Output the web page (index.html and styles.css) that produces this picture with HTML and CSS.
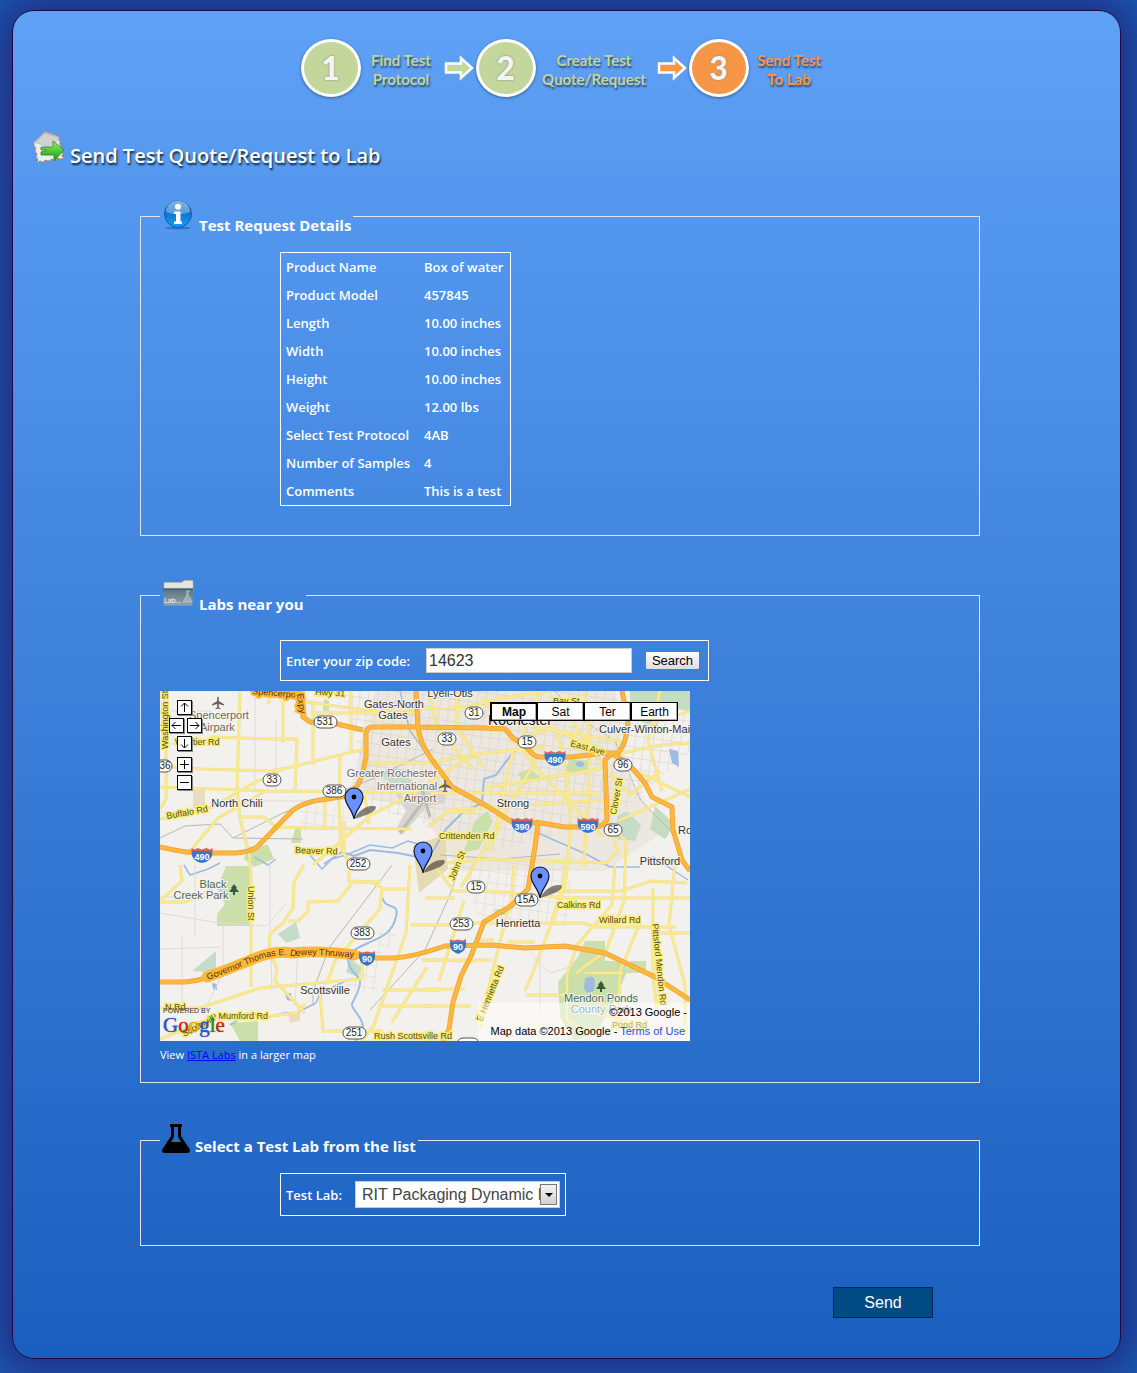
FILE: index.html
```html
<!DOCTYPE html>
<html lang="en">
<head>
<meta charset="utf-8">
<title>Send Test Quote/Request to Lab</title>
<link rel="stylesheet" href="styles.css">
</head>
<body>
<main class="panel">
  <ol class="steps">
    <li class="step"><span class="step-num">1</span><span class="step-text">Find Test<br>Protocol</span></li>
    <li class="step-arrow"><svg width="30" height="26" viewBox="0 0 30 26"><path d="M2 8.500h15V3l11 10-11 10v-5.500H2z" fill="#c3d69b" stroke="#fff" stroke-width="2.500"/></svg></li>
    <li class="step step-wide"><span class="step-num">2</span><span class="step-text">Create Test<br>Quote/Request</span></li>
    <li class="step-arrow"><svg width="30" height="26" viewBox="0 0 30 26"><path d="M2 8.500h15V3l11 10-11 10v-5.500H2z" fill="#f79646" stroke="#fff" stroke-width="2.500"/></svg></li>
    <li class="step current"><span class="step-num">3</span><span class="step-text">Send Test<br>To Lab</span></li>
  </ol>

  <h1 class="title">
    <svg width="32" height="34" viewBox="0 0 32 34">
      <defs>
        <linearGradient id="env" x1="0" y1="0" x2="0" y2="1"><stop offset="0" stop-color="#b5b5b5"/><stop offset="1" stop-color="#f4f4f4"/></linearGradient>
        <linearGradient id="arr" x1="0" y1="0" x2="0" y2="1"><stop offset="0" stop-color="#9af06a"/><stop offset="1" stop-color="#0f9a0c"/></linearGradient>
      </defs>
      <path d="M1 12 12 1l14 5 4 22-25 4z" fill="url(#env)" stroke="#8c8c8c" stroke-width=".8"/>
      <path d="M3 12 12 3l13 4 1 7-12 4z" fill="#d2d2d2" stroke="#aaa" stroke-width=".6"/>
      <path d="M1 12l14 5 11-7 4 18-25 4z" fill="#ededed" stroke="#bbb" stroke-width=".6"/>
      <path d="M4.500 31 1.500 14M29.500 27 26.500 11M6 31.500l23-3.500" stroke="#d24a3c" stroke-dasharray="2 4" fill="none"/>
      <path d="M8 17h12v-6l11 9-10 11v-6H8v-3l5-1v-1H8z" fill="url(#arr)" stroke="#159412" stroke-width=".8"/>
    </svg>
    <span>Send Test Quote/Request to Lab</span>
  </h1>

  <fieldset class="group details">
    <legend>
      <svg width="32" height="32" viewBox="0 0 32 32">
        <defs><linearGradient id="inf" x1="0" y1="0" x2="0" y2="1"><stop offset="0" stop-color="#4c96dc"/><stop offset=".45" stop-color="#1270ce"/><stop offset="1" stop-color="#12a0ff"/></linearGradient></defs>
        <ellipse cx="16" cy="30" rx="13" ry="1.500" fill="#1c5aa8" opacity=".55"/>
        <circle cx="16" cy="16" r="13.500" fill="url(#inf)" stroke="#0d5cb4"/>
        <path d="M4 14a12 12 0 0 1 24 0c-7 3-17 3-24 0z" fill="#fff" opacity=".3"/>
        <circle cx="16" cy="8.800" r="3" fill="#fff"/>
        <path d="M12 13.500h6.500v10H20v2.500h-8v-2.500h2V16h-2z" fill="#fff"/>
      </svg>
      <span>Test Request Details</span>
    </legend>
    <table class="box facts">
      <tr><th scope="row">Product Name</th><td>Box of water</td></tr>
      <tr><th scope="row">Product Model</th><td>457845</td></tr>
      <tr><th scope="row">Length</th><td>10.00 inches</td></tr>
      <tr><th scope="row">Width</th><td>10.00 inches</td></tr>
      <tr><th scope="row">Height</th><td>10.00 inches</td></tr>
      <tr><th scope="row">Weight</th><td>12.00 lbs</td></tr>
      <tr><th scope="row">Select Test Protocol</th><td>4AB</td></tr>
      <tr><th scope="row">Number of Samples</th><td>4</td></tr>
      <tr><th scope="row">Comments</th><td>This is a test</td></tr>
    </table>
  </fieldset>

  <fieldset class="group labs">
    <legend>
      <svg width="32" height="32" viewBox="0 0 32 32">
        <defs><linearGradient id="fol" x1="0" y1="0" x2="0" y2="1"><stop offset="0" stop-color="#54717f"/><stop offset="1" stop-color="#93a5aa"/></linearGradient></defs>
        <g transform="translate(0 2)">
        <path d="M2 4.500q0-1 1-1h17l2-2h8q1 0 1 1V12H2z" fill="#e6e4df" stroke="#bcbab4" stroke-width=".6"/>
        <path d="M1 9.500h30l-.6 17H1.600z" fill="url(#fol)"/>
        <path d="M1 9.500h30v1.500H1z" fill="#46606c"/>
        <path d="M24 12h4M25 12v4l-4 7h9l-4-7v-4" fill="#b7cbd0" fill-opacity=".5" stroke="#b9cdd3" stroke-width=".7"/>
        <text x="2" y="24" class="folder-text">Lab...</text>
        </g>
      </svg>
      <span>Labs near you</span>
    </legend>
    <div class="box zip">
      <label for="zip">Enter your zip code:</label>
      <input id="zip" type="text" value="14623">
      <button type="button" class="search">Search</button>
    </div>
    <div class="map">
      <svg class="map-art" width="530" height="350" viewBox="0 0 530 350" role="img" aria-label="Map of labs around Rochester">
        <defs>
          <pattern id="streets" width="9" height="11" patternUnits="userSpaceOnUse" patternTransform="rotate(8)"><path d="M0 .5h9M.5 0v11" stroke="#d9d3c8" stroke-width=".8"/></pattern>
          <g id="pin"><path d="M0 0c3-6 10-14 21-13 3 2-2 7-9 9-5 2-9 3-12 4z" fill="#222" opacity=".55"/><path d="M0 0c-1-9-9-14-9-22a9 9 0 0 1 18 0c0 8-8 13-9 22z" fill="#6a91fd" stroke="#0c1433" stroke-width="1.200"/><circle cx="0" cy="-22" r="2.400" fill="#000"/></g>
          <g id="plane"><path d="M-.8-5.500q.8-1.500 1.600 0V-2L6 1.300V2.500L.8 1V4.200L2.500 5.500v.8L0 5.600l-2.500.7v-.8L-.8 4.200V1L-6 2.500V1.300L-.8-2z" fill="#6b5f55"/></g>
          <g id="tree"><path d="M0-6 3-2H2l3 4H1v3h-2V2h-4l3-4h-1z" fill="#345c40"/></g>
          <g id="interstate"><path d="M-10.500-3h21Q11 7 0 9-11 7-10.500-3z" fill="#3a76c4"/><path d="M-10.500-3v-3l3 1.500 3-1.500 4.500 1.500L4.500-6l3 1.500 3-1.500v3z" fill="#d9605c"/></g>
          <g id="interstate-s"><path d="M-8-3H8Q9 6 0 9-9 6-8-3z" fill="#3a76c4"/><path d="M-8-3v-3l3 1.500 5-1 5 1L8-6v3z" fill="#d9605c"/></g>
        </defs>
        <path d="M0 0h530v350H0z" fill="#f3f1ee"/>
        <path d="M215 0h240l10 80 40 60-60 40H300l-40-60-70-20z" fill="#ece7df"/>
        <path d="M185 0h345v60L450 130 330 160l-60-25-60-20z" fill="url(#streets)" opacity=".8"/>
        <path d="M300 170h110v65h-90zM140 115h50v25h-50zM178 300h40v-60h18v10z" fill="url(#streets)" opacity=".6"/>

        <!-- parks -->
        <g fill="#cadfaa">
          <path d="M66 175h25v60H57v-12l8-10-8-15z"/>
          <path d="M70 332l28-2v20H80z"/>
          <path d="M315 130l12-10 6 10-14 28-16 4zM358 82l12-4 10 8-16 8zM135 138h6v14h-10zM88 156l20-2 6 14-20 8-10-8zM410 68l20 2-4 12-22-2zM164 8l5 2v10h-6zM335 218h14l-2 6h-13z"/>
          <path d="M425 250h20v20h22v10l-10 25-20 35-22 10-15-24-2-35 20-25zM470 270h16v12h-20z"/>
          <path d="M470 0h60v20l-25-5-15 20-20-10zM495 115l20 18-10 15-15-10z" fill="#c5dcc0"/>
          <path d="M118 243l18-12 4 16-14 5zM32 280l24-20v22zM457 125l10-5 14 14-6 16-18-2zM220 82l14-6 14 5 4 12-22-1zM190 268l12 8-4 10-12-5z" fill="#c5dcc8"/>
        </g>
        <path d="M253 154l32-10 3 34-29 24z" fill="#e6d9b4"/>
        <path d="M233 98l16 12 21-20v22l-28 32-6-6 10-18zM262 92l23 8v12l-23 4z" fill="#d8d4cf"/>
        <path d="M240 142l27-37M262 98l8 28" stroke="#bfbab4" stroke-width="3"/>
        <path d="M33 97h12v20H33zM128 322l12-3v11l-10 2z" fill="#e9dcc0"/>

        <!-- water -->
        <g fill="none" stroke="#9dbbe3" stroke-width="2" stroke-linejoin="round">
          <path d="M354 60l-18 24-12 4-2 24-20 10-16 16-18 30-30-6-28-3-16 6-12-4-18 12" />
          <path d="M150 164l12 14 10-10 14-4 24-10 22 3 16-7 14 4M24 174l6 10 18-6 12-6M94 166l14 8 8-6" stroke-width="1.500"/>
          <path d="M222 206c3 14 18 4 14 20s-14 20-28 26-24 12-18 24 14 8 8 24-10 10 0 24 2 18-2 26" />
          <path d="M70 334l20-12 18 4 16-4 12 0 20-10 4-10 30-14" stroke-width="1.500"/>
          <path d="M240 0l10 40 18 24M378 142l50 22 22 12 30 0M492 165l36 24" stroke-width="1.500"/>
        </g>
        <path d="M425 288q8-6 10 2l-1 10q-8 4-10-3zM509 58l9 2 1 16-7-4zM415 72q10-4 9 3-6 3-9-3zM52 292l5 1v6l-4-1zM125 302h6l1 8-5-1zM488 20l8 4 2 14-8-6z" fill="#9dbbe3"/>

        <!-- railways and minor streets -->
        <g fill="none" stroke="#b9b7b4" stroke-width="1">
          <path d="M0 147l25-12 35-2 13 14 70 1M73 147l50-25 54-20 40-16 56-28"/>
          <path d="M232 174l-25 33-38 50-16 43v15M280 164l60 4 60-5M300 174l-10 30-25 55-55 60"/>
          <path d="M395 0l20 24 40 26 26 60 30 30" stroke-dasharray="4 1"/>
        </g>
        <g fill="none" stroke="#dedbd6" stroke-width="1">
          <path d="M0 53h55M0 222l60 10 46 3 20-22M0 258l60-2M63 232v50l-20 40M110 174v60l2 65M35 174v70M22 244v75M0 206h60M138 255l-3 60M370 262l20 20 26-8M380 262v60M440 90l18 60M0 20h52M55 110h105M95 0v100M116 30v70"/>
        </g>

        <!-- arterial roads -->
        <g class="road-casing">
          <path d="M6 0v108L0 118M80 0l-3 98 3 30 9 34 2 22v112M109 0v13M123 0v52M0 36l24-3M50 46l60 2h27l-2 51M0 75l40 3 70 2 22-4 27-7 50-12M0 96l110 4 138 1 40-8M0 128l52-12 38-22 35-17M26 165l32-38 50-28M82 126h22l12 10 36 1 100 1M153 174l58-50 44-22 53-36M153 12v62M191 0v60M180 66l-1 48 2 42 8 16v18l32 1M165 100v37M184 130v34M205 105l4 28M0 211h26l35-18M20 174l2 16-22 20M144 174l-10 17-1 26-10 15-13 11-1 18 8 16-2 13 30 32M128 230h10l10-10v-9l30-1 15-19h18l11 6M222 198l-2 20-45 52-8 22M160 302l3 38h60M0 317h40l60-20 34-3 68-6v-25M0 348l40-16M110 325l26-3 9-9M250 174l-4 68-32 92-12 16M246 198h-26M250 234h60M222 299h60M218 315h55M232 331l35-55M262 269h70"/>
          <path d="M140 10l70 10 98-4 30-8 50-8M153 22h102M253 40l14 20M209 72h56l60-10 60-6M268 0l10 38 35 40M297 0v36l26 40M347 38l30 40 66 68M322 6l22 32M380 0l-14 34-4 18M350 52l40-15 62 25M371 36l90 14M353 60l-18 80-24 40-10 16M378 66l-30 50-20 45M397 40l10 46 4 50-6 60-30 80-10 24M325 97l120-20M270 102h170M290 119l155-10M268 136l20-15h28M425 0l5 60-6 116M412 30l34 48M288 172l40-4 118 4 12-12-14-40M448 130l18 20-2 60-18 50-30 22M458 130l72-32M450 82l20 22 30-24M462 62l40-8 28-2M476 80l54 26M500 0l-12 50 14 50M530 20l-60 20M274 174l20 26h36l76 7h124M265 207h30M310 232h112l14 4h80M320 249h14M354 174l-3 34-18 70-13 60M406 174l-3 20-12 38M391 200h70l30-10 36 2M347 251h28M455 174l-3 40-35 40-10 30v45l24 16M366 304h40M480 232l-20 48-2 60M493 197v90l4 30M497 242h33M515 174l-6 60 16 60v50M265 269l50 1M265 298h40M265 315h46M279 290l25-80M425 282h38M428 320l40 10"/>
        </g>
        <g class="road">
          <path d="M6 0v108L0 118M80 0l-3 98 3 30 9 34 2 22v112M109 0v13M123 0v52M0 36l24-3M50 46l60 2h27l-2 51M0 75l40 3 70 2 22-4 27-7 50-12M0 96l110 4 138 1 40-8M0 128l52-12 38-22 35-17M26 165l32-38 50-28M82 126h22l12 10 36 1 100 1M153 174l58-50 44-22 53-36M153 12v62M191 0v60M180 66l-1 48 2 42 8 16v18l32 1M165 100v37M184 130v34M205 105l4 28M0 211h26l35-18M20 174l2 16-22 20M144 174l-10 17-1 26-10 15-13 11-1 18 8 16-2 13 30 32M128 230h10l10-10v-9l30-1 15-19h18l11 6M222 198l-2 20-45 52-8 22M160 302l3 38h60M0 317h40l60-20 34-3 68-6v-25M0 348l40-16M110 325l26-3 9-9M250 174l-4 68-32 92-12 16M246 198h-26M250 234h60M222 299h60M218 315h55M232 331l35-55M262 269h70"/>
          <path d="M140 10l70 10 98-4 30-8 50-8M153 22h102M253 40l14 20M209 72h56l60-10 60-6M268 0l10 38 35 40M297 0v36l26 40M347 38l30 40 66 68M322 6l22 32M380 0l-14 34-4 18M350 52l40-15 62 25M371 36l90 14M353 60l-18 80-24 40-10 16M378 66l-30 50-20 45M397 40l10 46 4 50-6 60-30 80-10 24M325 97l120-20M270 102h170M290 119l155-10M268 136l20-15h28M425 0l5 60-6 116M412 30l34 48M288 172l40-4 118 4 12-12-14-40M448 130l18 20-2 60-18 50-30 22M458 130l72-32M450 82l20 22 30-24M462 62l40-8 28-2M476 80l54 26M500 0l-12 50 14 50M530 20l-60 20M274 174l20 26h36l76 7h124M265 207h30M310 232h112l14 4h80M320 249h14M354 174l-3 34-18 70-13 60M406 174l-3 20-12 38M391 200h70l30-10 36 2M347 251h28M455 174l-3 40-35 40-10 30v45l24 16M366 304h40M480 232l-20 48-2 60M493 197v90l4 30M497 242h33M515 174l-6 60 16 60v50M265 269l50 1M265 298h40M265 315h46M279 290l25-80M425 282h38M428 320l40 10"/>
        </g>

        <!-- motorways -->
        <g fill="none" stroke-linejoin="round">
          <g stroke="#f0a03a" stroke-width="5"><path d="M0 156Q25 162 43 162H76Q90 161 97 156L133 119Q145 111 160 109L187 105Q199 98 203 80L206 66V42Q207 36 213 36H257L325 37 345 38 353 47 365 54Q373 66 380 66L412 66 445 62H458Q467 52 468 30L462 0M95 0l30 3 16 2 2 21 7 5 27 2 26 6M256 0l2 36q2 16 12 30l22 30 33 18 27 17 26 1-3 24-7 42-17 17-27 16-13 34-10 20-8 26-4 27-15 30M375 131l30 5h27q14 0 15-9l-2-58 7-7 20 15 13 15 7 14 20 10 1 23 9 30 8 11M0 291h25q20-1 42-14 40-16 60-16h30l60 6h16q20-1 52-12l47-1 33 3 40-2 40 7 50 24 35 23"/></g>
          <g stroke="#fdb83b" stroke-width="3.400"><path d="M0 156Q25 162 43 162H76Q90 161 97 156L133 119Q145 111 160 109L187 105Q199 98 203 80L206 66V42Q207 36 213 36H257L325 37 345 38 353 47 365 54Q373 66 380 66L412 66 445 62H458Q467 52 468 30L462 0M95 0l30 3 16 2 2 21 7 5 27 2 26 6M256 0l2 36q2 16 12 30l22 30 33 18 27 17 26 1-3 24-7 42-17 17-27 16-13 34-10 20-8 26-4 27-15 30M375 131l30 5h27q14 0 15-9l-2-58 7-7 20 15 13 15 7 14 20 10 1 23 9 30 8 11M0 291h25q20-1 42-14 40-16 60-16h30l60 6h16q20-1 52-12l47-1 33 3 40-2 40 7 50 24 35 23"/></g>
        </g>

        <!-- road names -->
        <path d="M47 286Q72 277 93 268T133 262Q160 259 194 264" fill="none" stroke="#fdb83b" stroke-width="11" stroke-linecap="round"/>
        <path id="thruway" d="M48 289Q72 280 93 271T133 265Q160 262 215 269" fill="none"/>
        <g class="road-name">
          <text transform="translate(8 58) rotate(-90)">Washington St</text>
          <text x="15" y="54">Whittier Rd</text>
          <text transform="translate(7 128) rotate(-10)">Buffalo Rd</text>
          <text transform="translate(135 162) rotate(2)">Beaver Rd</text>
          <text transform="translate(88 195) rotate(90)">Union St</text>
          <text transform="translate(155 4) rotate(3)">Hwy 31</text>
          <text x="393" y="13">Bay St</text>
          <text transform="translate(410 55) rotate(15)">East Ave</text>
          <text transform="translate(456 124) rotate(-80)">Clover St</text>
          <text x="279" y="148">Crittenden Rd</text>
          <text transform="translate(294 190) rotate(-68)">John St</text>
          <text x="397" y="217">Calkins Rd</text>
          <text x="439" y="232">Willard Rd</text>
          <text transform="translate(492 233) rotate(84)">Pittsford Mendon Rd</text>
          <text transform="translate(322 331) rotate(-68)">E Henrietta Rd</text>
          <text x="214" y="348">Rush Scottsville Rd</text>
          <text x="51" y="328">e Mumford Rd</text>
          <text x="5" y="319">N Rd</text>
          <text transform="translate(24 346) rotate(-28)">Scottsvill</text>
          <text x="452" y="337">Pond Rd</text>
        </g>
        <g class="motorway-name">
          <text class="plain"><textPath href="#thruway">Governor Thomas E. Dewey Thruway</textPath></text>
          <text transform="translate(92 3) rotate(5)">Spencerport</text>
          <text transform="translate(137 3) rotate(82)">Expy</text>
        </g>

        <!-- route shields -->
        <g class="shields">
          <g><rect x="154" y="25" width="23" height="12" rx="6"/><text x="165" y="34">531</text></g>
          <g><rect x="103" y="83" width="18" height="12" rx="6"/><text x="112" y="92">33</text></g>
          <g><rect x="163" y="94" width="23" height="12" rx="6"/><text x="174" y="103">386</text></g>
          <g><rect x="-8" y="69" width="20" height="12" rx="6"/><text x="5" y="78">36</text></g>
          <g><rect x="187" y="167" width="23" height="12" rx="6"/><text x="198" y="176">252</text></g>
          <g><rect x="305" y="16" width="18" height="12" rx="6"/><text x="314" y="25">31</text></g>
          <g><rect x="278" y="42" width="18" height="12" rx="6"/><text x="287" y="51">33</text></g>
          <g><rect x="358" y="45" width="18" height="12" rx="6"/><text x="367" y="54">15</text></g>
          <g><rect x="454" y="68" width="18" height="12" rx="6"/><text x="463" y="77">96</text></g>
          <g><rect x="444" y="133" width="18" height="12" rx="6"/><text x="453" y="142">65</text></g>
          <g><rect x="307" y="190" width="18" height="12" rx="6"/><text x="316" y="199">15</text></g>
          <g><rect x="355" y="203" width="23" height="12" rx="6"/><text x="366" y="212">15A</text></g>
          <g><rect x="290" y="227" width="23" height="12" rx="6"/><text x="301" y="236">253</text></g>
          <g><rect x="191" y="236" width="23" height="12" rx="6"/><text x="202" y="245">383</text></g>
          <g><rect x="183" y="336" width="23" height="12" rx="6"/><text x="194" y="345">251</text></g>
          <g><rect x="297" y="347" width="22" height="12" rx="6"/></g>
        </g>
        <g class="interstates">
          <use href="#interstate" x="42" y="163"/><text x="42" y="169">490</text>
          <use href="#interstate" x="395" y="66"/><text x="395" y="72">490</text>
          <use href="#interstate" x="362" y="133"/><text x="362" y="139">390</text>
          <use href="#interstate" x="428" y="133"/><text x="428" y="139">590</text>
          <use href="#interstate-s" x="207" y="266"/><text x="207" y="271">90</text>
          <use href="#interstate-s" x="298" y="254"/><text x="298" y="259">90</text>
        </g>

        <!-- places -->
        <g class="place">
          <text x="234" y="17">Gates-North</text><text x="233" y="28">Gates</text><text x="236" y="55">Gates</text>
          <text x="77" y="116">North Chili</text><text x="353" y="116">Strong</text><text x="358" y="236">Henrietta</text>
          <text x="165" y="303">Scottsville</text><text x="500" y="174">Pittsford</text><text x="290" y="6">Lyell-Otis</text>
          <text x="360" y="34" class="city">Rochester</text>
          <text x="439" y="42" class="start">Culver-Winton-Main</text><text x="518" y="143" class="start">Rochester</text>
        </g>
        <g class="place airport">
          <text x="29" y="28" class="start">Spencerport</text><text x="40" y="40" class="start">Airpark</text>
          <text x="232" y="86">Greater Rochester</text><text x="247" y="99">International</text><text x="260" y="111">Airport</text>
        </g>
        <g class="place park">
          <text x="53" y="197">Black</text><text x="41" y="208">Creek Park</text>
          <text x="441" y="311">Mendon Ponds</text><text x="441" y="322">County Park</text>
        </g>
        <use href="#plane" x="58" y="12"/><use href="#plane" x="285" y="95"/>
        <use href="#tree" x="74" y="199"/><use href="#tree" x="441" y="296"/>
        <use href="#pin" x="194" y="128"/><use href="#pin" x="263" y="182"/><use href="#pin" x="380" y="207"/>
      </svg>
      <div class="pan">
        <button type="button" class="up" aria-label="Pan up"><svg width="13" height="13"><path d="M6.500 11V2M3 5.500 6.500 2 10 5.500"/></svg></button>
        <button type="button" class="left" aria-label="Pan left"><svg width="13" height="13"><path d="M11 6.500H2M5.500 3 2 6.500 5.500 10"/></svg></button>
        <button type="button" class="right" aria-label="Pan right"><svg width="13" height="13"><path d="M2 6.500h9M7.500 3 11 6.500 7.500 10"/></svg></button>
        <button type="button" class="down" aria-label="Pan down"><svg width="13" height="13"><path d="M6.500 2v9M3 7.500 6.500 11 10 7.500"/></svg></button>
        <button type="button" class="in" aria-label="Zoom in"><svg width="13" height="13"><path d="M2 6.500h9M6.500 2v9"/></svg></button>
        <button type="button" class="out" aria-label="Zoom out"><svg width="13" height="13"><path d="M2 6.500h9"/></svg></button>
      </div>
      <div class="types">
        <button type="button" class="on">Map</button><button type="button">Sat</button><button type="button">Ter</button><button type="button">Earth</button>
      </div>
      <div class="brand"><small>POWERED BY</small><b><i class="b">G</i><i class="r">o</i><i class="y">o</i><i class="b">g</i><i class="g">l</i><i class="r">e</i></b></div>
      <div class="credits"><p>©2013 Google -</p><p>Map data ©2013 Google - <a href="#">Terms of Use</a></p></div>
    </div>
    <p class="larger">View <a href="#">ISTA Labs</a> in a larger map</p>
  </fieldset>

  <fieldset class="group choose">
    <legend>
      <svg width="28" height="30" viewBox="0 0 28 30"><path d="M8 0h12v3h-1v9l8.500 13q1.500 4-2 4h-23q-3.500 0-2-4L9 12V3H8zM12 3v10l-3 5h10l-3-5V3z" fill="#000" fill-rule="evenodd"/></svg>
      <span>Select a Test Lab from the list</span>
    </legend>
    <div class="box pick">
      <label for="lab">Test Lab:</label>
      <span class="select"><select id="lab"><option>RIT Packaging Dynamic Lab</option></select></span>
    </div>
  </fieldset>

  <div class="actions"><button type="submit" class="send">Send</button></div>
</main>
</body>
</html>
```
FILE: styles.css
```css
*, *::before, *::after { box-sizing: border-box; }
body {
  margin: 0;
  padding: 10px 16px 14px 12px;
  background: #1b5ab4;
  color: #fff;
  font: 600 13px/20px "Trebuchet MS", "Open Sans", sans-serif;
}
.panel {
  border: 1px solid #23083f;
  border-radius: 22px;
  padding: 28px 35px 40px 22px;
  background: linear-gradient(#5ea1f6, #1a5fbf);
  box-shadow: 0 0 40px 14px #202e82;
}

.steps {
  display: flex;
  justify-content: center;
  align-items: center;
  margin: 0;
  padding: 0 0 0 10px;
  list-style: none;
  font: bold 15px/19px Lato, sans-serif;
  text-align: center;
  color: #c3d69b;
}
.step { display: flex; align-items: center; }
.step-num {
  width: 60px;
  height: 58px;
  border: 3px solid #fff;
  border-radius: 50%;
  background: #c3d69b;
  color: #f4f4f4;
  font: 900 32px/51px Lato, sans-serif;
  text-shadow: 0 0 2px #777;
  box-shadow: 0 1px 3px rgba(0, 0, 0, .4);
}
.step-text { width: 81px; padding-top: 3px; text-shadow: 1px 2px 2px rgba(0, 0, 0, .55); }
.step-wide .step-text { width: 117px; }
.step-arrow { display: flex; padding: 0 2px; }
.step-wide + .step-arrow { padding-left: 4px; }
.current { color: #f79646; }
.current .step-num { background: #f79646; }

.title {
  display: flex;
  align-items: flex-end;
  gap: 5px;
  margin: 33px 0 0 -2px;
  font-size: 20px;
  line-height: 24px;
  font-weight: 600;
  text-shadow: 1px 2px 2px #123;
}
.title svg { margin-bottom: 4px; }

.group {
  width: 80%;
  margin: 0 auto;
  border: 1px solid #dfe3ea;
  padding: 0 19px;
}
.group legend {
  display: flex;
  align-items: flex-end;
  gap: 5px;
  min-height: 37px;
  padding: 0 2px;
  font-size: 15px;
  line-height: 20px;
  font-weight: bold;
}
.group legend svg { align-self: flex-start; }
.details { margin-top: 30px; padding-bottom: 29px; }
.labs { margin-top: 41px; padding-bottom: 17px; }
.choose { margin-top: 41px; padding-bottom: 29px; }
.choose legend { min-height: 32px; }
.folder-text { font: 7px "Open Sans", sans-serif; fill: #fff; }

.box { margin: 17px 0 0 120px; border: 1px solid #fff; }
.facts { border-spacing: 0; }
.facts th, .facts td {
  padding: 4px 5px;
  font-weight: 600;
  text-align: left;
}
.facts th { width: 138px; }
.facts td { width: 91px; }
.zip, .pick {
  display: flex;
  align-items: center;
  width: max-content;
  gap: 10px;
  padding: 7px 5px;
}
.zip { margin-top: 26px; margin-bottom: 10px; padding-right: 8px; }
.zip label { width: 130px; }
.pick label { width: 59px; }
.zip input {
  width: 206px;
  height: 25px;
  border: 1px solid #ccc;
  padding: 0 2px;
  background: #fff;
  color: #333;
  font: 16px "Liberation Sans", sans-serif;
}
.search {
  margin-left: 3px;
  width: 55px;
  height: 19px;
  border: 1px solid #777;
  border-radius: 2px;
  padding: 0;
  background: linear-gradient(#fff, #ddd);
  color: #000;
  font: 13px/15px "Liberation Sans", sans-serif;
}

.map {
  position: relative;
  width: 530px;
  max-width: 100%;
  height: 350px;
  overflow: hidden;
  font: 11px/13px "Liberation Sans", sans-serif;
  color: #000;
}
.map-art { display: block; font: 11px "Liberation Sans", sans-serif; }
.road-casing { fill: none; stroke: #ecdc90; stroke-width: 3; }
.road { fill: none; stroke: #fbea8c; stroke-width: 2; }
.shields rect { fill: #fff; stroke: #555; }
.shields text { font-size: 10px; text-anchor: middle; fill: #222; }
.interstates text { font-size: 9px; font-weight: bold; text-anchor: middle; fill: #fff; }
.road-name text { font-size: 9px; fill: #5c4b14; paint-order: stroke; stroke: #f8ee7c; stroke-width: 3; }
.motorway-name text { font-size: 9px; fill: #59320b; paint-order: stroke; stroke: #fdb83b; stroke-width: 4; }
.motorway-name .plain { stroke: none; }
.place text { text-anchor: middle; fill: #333; paint-order: stroke; stroke: #f6f4f0; stroke-width: 2; }
.place .start { text-anchor: start; }
.place .city { font-size: 14px; fill: #111; }
.airport text { fill: #75675c; }
.park text { fill: #47694f; }

.pan {
  position: absolute;
  top: 9px;
  left: 9px;
  display: grid;
  grid-template: 18px 18px 21px 18px 15px / repeat(4, 8px);
  grid-template-areas: ". u u ." "l l r r" ". d d ." ". i i ." ". o o .";
}
.pan button {
  width: 15px;
  height: 15px;
  border: 1px solid #000;
  padding: 0;
  background: #fff;
  box-shadow: 1px 1px 0 #888;
}
.pan svg { display: block; fill: none; stroke: #000; }
.up { grid-area: u; }
.left { grid-area: l; }
.right { grid-area: r; margin-left: 2px; }
.down { grid-area: d; }
.in { grid-area: i; }
.out { grid-area: o; }
.types { position: absolute; top: 11px; right: 12px; display: flex; }
.types button {
  width: 47px;
  height: 19px;
  border: 1px solid #000;
  padding: 0;
  background: #fff;
  color: #000;
  font: 12px/16px "Liberation Sans", sans-serif;
  box-shadow: inset -1px -1px 0 #aaa;
}
.types .on { font-weight: bold; border-width: 2px 1px 1px 2px; }
.brand { position: absolute; left: 3px; bottom: 5px; display: grid; }
.brand small { font-size: 7px; line-height: 7px; color: #333; }
.brand b { font: 21px/22px "Liberation Serif", serif; text-shadow: 0 0 1px #555; }
.brand i { font-style: normal; }
.b { color: #2a56c6; }
.r { color: #d62408; }
.y { color: #efba00; }
.g { color: #129a26; }
.credits {
  position: absolute;
  right: 0;
  bottom: 0;
  width: 212px;
  padding-bottom: 3px;
  background: rgba(255, 255, 255, .5);
  text-align: right;
}
.credits p { margin: 3px 3px 6px; }
.credits p + p { margin: 0 5px 0; }
.credits a { color: #2a4fd0; text-decoration: none; }

.larger { margin: 4px 0 0; font-size: 11px; font-weight: 500; }
.larger a { color: #00f; }

.select { position: relative; display: flex; }
.select::before, .select::after { content: ""; position: absolute; pointer-events: none; }
.select::before {
  top: 3px;
  right: 3px;
  width: 17px;
  height: 21px;
  border: 1px solid #777;
  background: linear-gradient(#f4f4f4, #d0d0d0);
}
.select::after {
  top: 12px;
  right: 7px;
  border: 4px solid transparent;
  border-top-color: #000;
  border-bottom: 0;
}
.select select {
  appearance: none;
  width: 205px;
  height: 27px;
  border: 1px solid #ccc;
  border-radius: 0;
  padding: 0 16px 0 6px;
  background: #fff;
  color: #444;
  font: 16px "Liberation Sans", sans-serif;
}
.actions { display: flex; justify-content: flex-end; margin-top: 41px; padding-right: 152px; }
.send {
  width: 100px;
  height: 31px;
  border: 1px solid #03255f;
  padding: 0;
  background: #004b85;
  color: #fff;
  font: 16px "Liberation Sans", sans-serif;
}
```
